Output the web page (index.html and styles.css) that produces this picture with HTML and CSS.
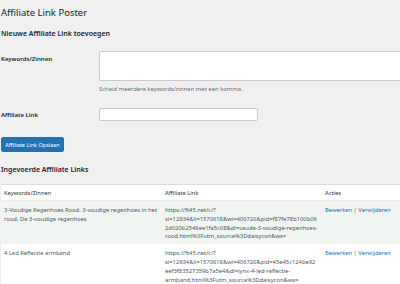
FILE: index.html
```html
<!DOCTYPE html>
<html lang="nl">
<head>
    <meta charset="UTF-8">
    <title>Affiliate Link Poster</title>
    <link rel="stylesheet" href="styles.css">
</head>
<body>
    <div class="wrap">
        <h1 class="title">Affiliate Link Poster</h1>
        <h2 class="subtitle">Nieuwe Affiliate Link toevoegen</h2>

        <div class="form">
            <div class="row">
                <label class="label">Keywords/Zinnen</label>
                <div class="field">
                    <textarea class="keywords"></textarea>
                    <p class="help">Scheid meerdere keywords/zinnen met een komma.</p>
                </div>
            </div>
            <div class="row second-row">
                <label class="label">Affiliate Link</label>
                <div class="field">
                    <input type="text" class="link">
                </div>
            </div>
        </div>

        <button class="button">Affiliate Link Opslaan</button>

        <h2 class="subtitle second">Ingevoerde Affiliate Links</h2>

        <table class="links">
            <thead>
                <tr>
                    <th class="col1">Keywords/Zinnen</th>
                    <th class="col2">Affiliate Link</th>
                    <th class="col3">Acties</th>
                </tr>
            </thead>
            <tbody>
                <tr class="alt">
                    <td>3-Voudige Regenhoes Rood, 3-voudige regenhoes in het rood, De 3-voudige regenhoes</td>
                    <td class="url">https://ft45.net/c/?<br>si=12934&amp;li=1570618&amp;wi=406720&amp;pid=f87fe78b100b06<br>2d020b2546ee1fa5c08&amp;dl=vaude-3-voudige-regenhoes-<br>rood.html%3Futm_source%3Ddaisycon&amp;ws=</td>
                    <td><a href="#">Bewerken</a> | <a href="#">Verwijderen</a></td>
                </tr>
                <tr>
                    <td>4 Led Reflectie armband</td>
                    <td class="url">https://ft45.net/c/?<br>si=12934&amp;li=1570618&amp;wi=406720&amp;pid=45e45c124be92<br>eef3f83527359b7a5e4&amp;dl=lynx-4-led-reflectie-<br>armband.html%3Futm_source%3Ddaisycon&amp;ws=</td>
                    <td><a href="#">Bewerken</a> | <a href="#">Verwijderen</a></td>
                </tr>
            </tbody>
        </table>
    </div>
</body>
</html>
```

FILE: styles.css
```css
:root{
    --bg: #f0f0f1;
    --text: #1d2327;
    --muted: #646970;
    --cell: #50575e;
    --link: #2271b1;
    --line: #c8c8ca;
}

html, body{
    margin: 0;
    padding: 0;
    background-color: var(--bg);
    color: var(--text);
    font-family: "Noto Sans", "Liberation Sans", sans-serif;
}

.wrap{
    padding: 0 0 0 1px;
    overflow: hidden;
    height: 284px;
}

.title{
    font-size: 9.5px;
    font-weight: 400;
    margin: 6px 0 0 0;
    line-height: 14px;
}

.subtitle{
    font-size: 7px;
    font-weight: 600;
    margin: 9px 0 0 0;
    line-height: 9px;
}

.form{
    margin-top: 13px;
}

.row{
    display: grid;
    grid-template-columns: 98px 1fr;
}

.label{
    font-size: 6px;
    font-weight: 600;
    line-height: 8px;
    padding-top: 4px;
}

.keywords{
    display: block;
    box-sizing: border-box;
    width: 310px;
    height: 30px;
    border: 1px solid var(--line);
    border-radius: 2px;
    background: #fff;
    margin: 0;
    resize: none;
}

.help{
    font-size: 5.9px;
    color: var(--muted);
    margin: 4px 0 0 0;
    line-height: 8px;
}

.second-row{
    margin-top: 15px;
}

.second-row .label{
    padding-top: 3px;
}

.link{
    display: block;
    box-sizing: border-box;
    width: 159px;
    height: 13px;
    border: 1px solid var(--line);
    border-radius: 2px;
    background: #fff;
    margin: 0;
}

.button{
    display: block;
    margin-top: 16px;
    width: 63px;
    height: 15px;
    padding: 0;
    background-color: var(--link);
    color: #fff;
    border: 1px solid #2271b1;
    border-radius: 2px;
    font-family: inherit;
    font-size: 5.5px;
}

.second{
    margin-top: 13px;
}

.links{
    margin-top: 10px;
    width: 420px;
    border-collapse: collapse;
    table-layout: fixed;
    border-top: 1px solid #dcdcde;
    background: #fff;
    font-size: 5.8px;
}

.links th{
    height: 15px;
    padding: 0 0 0 3px;
    font-weight: 400;
    text-align: left;
    color: #2c3338;
    border-bottom: 1px solid #ececec;
}

/* cell widths are content widths, padding comes on top */
.col1{ width: 158px; }
.col2{ width: 157px; }

.links td{
    vertical-align: top;
    padding: 5px 0 3px 3px;
    line-height: 8.8px;
    color: var(--cell);
}

.links td.url{
    white-space: nowrap;
    overflow: hidden;
}

.links tr.alt td{
    background: #f1f5f2;
}

.links a{
    color: var(--link);
    text-decoration: none;
}
```
